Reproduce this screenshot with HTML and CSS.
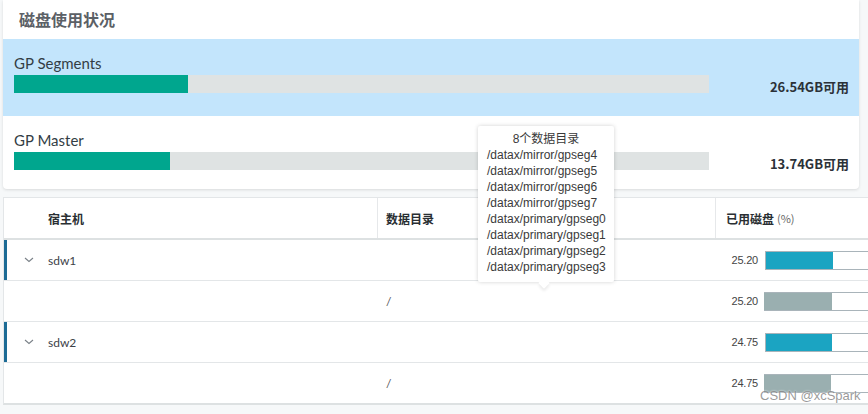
FILE: index.html
```html
<!DOCTYPE html>
<html lang="zh">
<head>
<meta charset="utf-8">
<link rel="stylesheet" href="styles.css">
</head>
<body>
<div class="page">
  <div class="card">
    <div class="card-title">磁盘使用状况</div>
    <div class="usage selected">
      <div class="usage-main">
        <div class="usage-label">GP Segments</div>
        <div class="usage-bar"><div class="usage-fill" style="width:25%"></div></div>
      </div>
      <div class="usage-free">26.54GB可用</div>
    </div>
    <div class="usage">
      <div class="usage-main">
        <div class="usage-label">GP Master</div>
        <div class="usage-bar"><div class="usage-fill" style="width:22.4%"></div></div>
      </div>
      <div class="usage-free">13.74GB可用</div>
    </div>
  </div>

  <div class="table">
    <div class="row head">
      <div class="cell c1 hcell">宿主机</div>
      <div class="cell c2 hcell">数据目录</div>
      <div class="cell c3 hcell">已用磁盘 <span class="unit">(%)</span></div>
    </div>
    <div class="row parent">
      <div class="cell c1"><span class="chev"><svg width="10" height="6" viewBox="0 0 10 6"><path d="M1 1 L5 4.5 L9 1" fill="none" stroke="#7a8188" stroke-width="1.1"/></svg></span>sdw1</div>
      <div class="cell c2"></div>
      <div class="cell c3"><span class="num">25.20</span><div class="pbar"><div class="pfill" style="width:58%"></div></div></div>
    </div>
    <div class="row child">
      <div class="cell c1"></div>
      <div class="cell c2">/</div>
      <div class="cell c3"><span class="num">25.20</span><div class="pbar grey"><div class="pfill" style="width:58%"></div></div></div>
    </div>
    <div class="row parent">
      <div class="cell c1"><span class="chev"><svg width="10" height="6" viewBox="0 0 10 6"><path d="M1 1 L5 4.5 L9 1" fill="none" stroke="#7a8188" stroke-width="1.1"/></svg></span>sdw2</div>
      <div class="cell c2"></div>
      <div class="cell c3"><span class="num">24.75</span><div class="pbar"><div class="pfill" style="width:57%"></div></div></div>
    </div>
    <div class="row child last">
      <div class="cell c1"></div>
      <div class="cell c2">/</div>
      <div class="cell c3"><span class="num">24.75</span><div class="pbar grey"><div class="pfill" style="width:57%"></div></div></div>
    </div>
  </div>

  <div class="tooltip">
    <div class="tt-title">8个数据目录</div>
    <div>/datax/mirror/gpseg4</div>
    <div>/datax/mirror/gpseg5</div>
    <div>/datax/mirror/gpseg6</div>
    <div>/datax/mirror/gpseg7</div>
    <div>/datax/primary/gpseg0</div>
    <div>/datax/primary/gpseg1</div>
    <div>/datax/primary/gpseg2</div>
    <div>/datax/primary/gpseg3</div>
  </div>

  <div class="watermark">CSDN @xcSpark</div>
</div>
</body>
</html>
```

FILE: styles.css
```css
html, body {
  margin: 0;
  padding: 0;
  background: #f6f8f9;
  overflow: hidden;
}
body {
  width: 868px;
  height: 414px;
  font-family: "Source Sans Pro", Lato, "Noto Sans CJK SC", sans-serif;
  color: #333;
}
.page {
  position: relative;
  width: 868px;
  height: 414px;
  padding-left: 3px;
  box-sizing: border-box;
}
.card {
  width: 856px;
  background: #fff;
  border-radius: 0 0 4px 4px;
  box-shadow: 0 1px 3px rgba(0,0,0,0.12);
}
.card-title {
  height: 39px;
  line-height: 39px;
  padding-left: 16px;
  font-size: 16px;
  font-weight: bold;
  color: #5b6066;
  font-family: "Noto Sans CJK SC", sans-serif;
}
.usage {
  display: flex;
  padding: 14px 10px 23px 11px;
  height: 77px;
  box-sizing: border-box;
}
.usage + .usage {
  height: 73px;
  padding-bottom: 19px;
}
.usage.selected {
  background: #c3e5fc;
}
.usage-main {
  width: 695px;
}
.usage-label {
  font-size: 15px;
  line-height: 20px;
  color: #333d45;
}
.usage-bar {
  margin-top: 2px;
  height: 18px;
  background: #dfe3e3;
}
.usage-fill {
  height: 100%;
  background: #00a68e;
}
.usage-free {
  flex: 1;
  align-self: flex-end;
  text-align: right;
  font-size: 13px;
  font-weight: bold;
  line-height: 16px;
  margin-bottom: -2px;
  color: #2b3138;
  font-family: "Noto Sans CJK SC", sans-serif;
}

.table {
  margin-top: 8px;
  width: 900px;
  background: #fff;
  border: 1px solid #e3e6e8;
  border-bottom: 2px solid #dde1e2;
  font-size: 12px;
}
.row {
  display: flex;
  height: 40px;
  border-bottom: 1px solid #e3e6e8;
}
.row.last {
  border-bottom: none;
}
.row.head {
  border-bottom: 2px solid #dde1e2;
}
.row.parent {
  box-shadow: inset 3px 0 0 #1c6b95;
}
.cell {
  display: flex;
  align-items: center;
  box-sizing: border-box;
}
.c1 { width: 374px; padding-left: 44px; position: relative; }
.c2 { width: 338px; padding-left: 8px; color: #555; }
.c3 { flex: 1; padding-left: 10px; }
.hcell {
  font-weight: bold;
  font-size: 12px;
  color: #2a2f33;
  font-family: "Noto Sans CJK SC", sans-serif;
}
.head .c1, .head .c2 { border-right: 1px solid #e6e8ea; }
.head .c3 { padding-left: 10px; }
.unit {
  font-weight: normal;
  font-size: 11px;
  color: #666;
  margin-left: 3px;
}
.chev {
  position: absolute;
  left: 20px;
  top: 17px;
  display: flex;
}
.parent .c1 { color: #3c4248; }
.num {
  width: 32px;
  text-align: right;
  color: #444;
  font-family: "Liberation Sans", sans-serif;
  font-size: 11px;
  letter-spacing: -0.2px;
}
.pbar {
  margin-left: 7px;
  width: 118px;
  height: 19px;
  box-sizing: border-box;
  border: 1px solid #a9b4ba;
  background: #fff;
}
.pfill {
  height: 100%;
  background: #1ba4c2;
}
.pbar.grey {
  margin-left: 6px;
  border: none;
  border-top: 1px solid #a9b4ba;
  border-bottom: 1px solid #a9b4ba;
}
.pbar.grey .pfill {
  background: #9aafb0;
}

.tooltip {
  position: absolute;
  left: 478px;
  top: 126px;
  width: 136px;
  height: 156px;
  box-sizing: border-box;
  padding: 5px 0 0 9px;
  background: #fff;
  border-radius: 2px;
  box-shadow: 0 0 4px rgba(0,0,0,0.18);
  font-family: "Liberation Sans", "Noto Sans CJK SC", sans-serif;
  font-size: 12px;
  line-height: 16px;
  color: #3a3a3a;
}
.tt-title {
  text-align: center;
  padding-right: 9px;
}
.tooltip::after {
  content: "";
  position: absolute;
  left: 62px;
  bottom: -5px;
  width: 8px;
  height: 8px;
  background: #fff;
  transform: rotate(45deg);
  box-shadow: 2px 2px 3px rgba(0,0,0,0.08);
}
.watermark {
  position: absolute;
  left: 760px;
  top: 388px;
  font-family: "Liberation Sans", sans-serif;
  font-size: 13px;
  color: rgba(120,120,120,0.75);
  text-shadow: 0 0 2px #fff;
}
```
